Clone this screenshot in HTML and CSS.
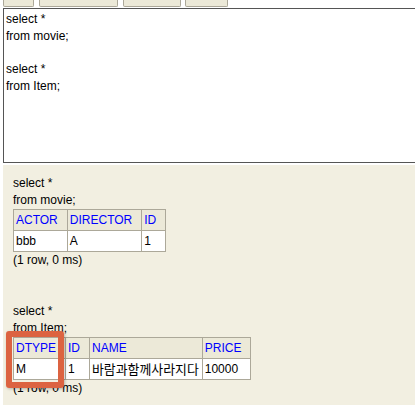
FILE: index.html
```html
<!DOCTYPE html>
<html>
<head>
<meta charset="utf-8">
<link rel="stylesheet" href="styles.css">
</head>
<body>
<div class="toolbar">
  <div class="btn b1"></div>
  <div class="btn b2"></div>
  <div class="btn b3"></div>
  <div class="btn b4"></div>
</div>
<textarea class="sql">select *
from movie;

select *
from Item;</textarea>
<div class="result">
  <div class="line">select *</div>
  <div class="line">from movie;</div>
  <table class="rs">
    <tr><th>ACTOR</th><th>DIRECTOR</th><th>ID</th></tr>
    <tr><td>bbb</td><td>A</td><td>1</td></tr>
  </table>
  <div class="line">(1 row, 0 ms)</div>
  <div class="line">&nbsp;</div>
  <div class="line">&nbsp;</div>
  <div class="line">select *</div>
  <div class="line">from Item;</div>
  <div class="tablewrap">
    <table class="rs">
      <tr><th>DTYPE</th><th>ID</th><th>NAME</th><th>PRICE</th></tr>
      <tr><td>M</td><td>1</td><td class="ko">바람과함께사라지다</td><td>10000</td></tr>
    </table>
    <span class="highlight"></span>
  </div>
  <div class="line">(1 row, 0 ms)</div>
</div>
</body>
</html>
```

FILE: styles.css
```css
html, body {
  margin: 0;
  padding: 0;
  overflow: hidden;
  background: #ffffff;
  font-family: "Liberation Sans", Arial, sans-serif;
  font-size: 12px;
  color: #000;
}

.toolbar {
  display: flex;
  gap: 4px;
  padding-left: 3px;
  height: 8px;
}

.btn {
  height: 6px;
  background: #ece9d8;
  border: 1px solid #aca899;
  border-top: none;
  border-radius: 0 0 2px 2px;
}
.b1 { width: 29px; }
.b2 { width: 77px; margin-left: 1px; }
.b3 { width: 56px; margin-left: 1px; }
.b4 { width: 41px; }

.sql {
  display: block;
  box-sizing: border-box;
  margin: 0 0 0 3px;
  width: 412px;
  height: 155px;
  padding: 2px 2px;
  border: 1px solid #555555;
  border-right: none;
  font-family: "Liberation Sans", Arial, sans-serif;
  font-size: 12px;
  line-height: 16.8px;
  color: #000;
  resize: none;
  overflow: hidden;
  background: #fff;
}

.result {
  margin: 2px 0 0 3px;
  padding: 10px 0 8px 10px;
  background: #f2efe1;
}

.line {
  line-height: 17px;
  height: 17px;
  white-space: nowrap;
}

.rs {
  border-collapse: collapse;
  border: 1px solid #aca899;
}

.rs th, .rs td {
  border: 1px solid #aca899;
  font-weight: normal;
  text-align: left;
  line-height: 16px;
  padding: 2px 3px 2px 2px;
  white-space: nowrap;
}

.rs th {
  background: #ece9d8;
  color: #0000ff;
  padding-right: 9px;
}

.rs td {
  background: #ffffff;
}

.rs td.ko {
  font-family: "Noto Sans CJK KR", "Liberation Sans", sans-serif;
  font-size: 12.9px;
  padding-right: 3px;
}

.tablewrap {
  position: relative;
  display: inline-block;
  vertical-align: top;
}

.highlight {
  position: absolute;
  left: -7px;
  top: -6px;
  width: 58px;
  height: 57px;
  box-sizing: border-box;
  border: 6px solid #dc6341;
  border-radius: 3px;
  box-shadow: 1px 1px 3px rgba(0,0,0,0.25);
}
```
